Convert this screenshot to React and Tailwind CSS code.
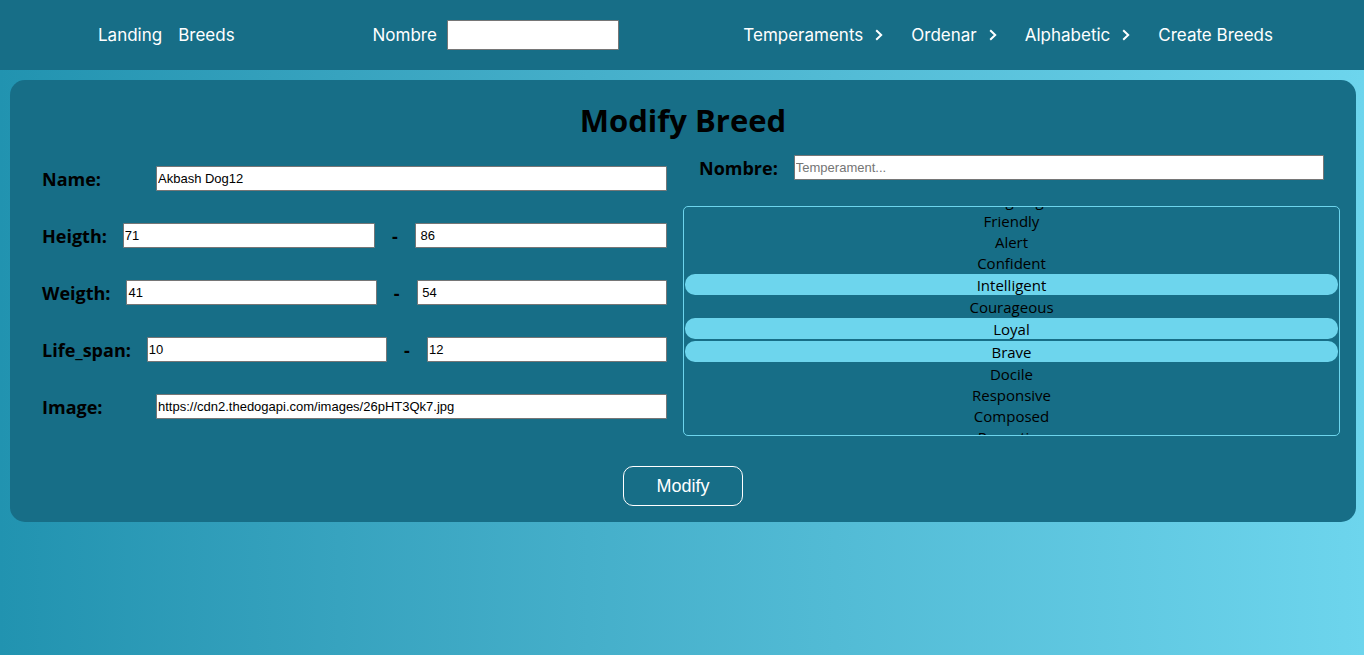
import { useLayoutEffect, useRef, useState } from "react";

const NAV_FONT = "font-[Inter,sans-serif]";
const INPUT =
  "h-[25px] w-full min-w-0 rounded-[1px] border border-[#767676] bg-white px-px font-['Liberation_Sans',Arial,sans-serif] text-[13px] leading-5 text-black placeholder:text-[#757575] focus:outline-none";
const LABEL = "shrink-0 whitespace-nowrap text-[18px] leading-6 font-bold";

const TEMPERAMENTS = [
  "Outgoing",
  "Friendly",
  "Alert",
  "Confident",
  "Intelligent",
  "Courageous",
  "Loyal",
  "Brave",
  "Docile",
  "Responsive",
  "Composed",
  "Receptive",
];

function Chevron() {
  return (
    <svg viewBox="0 0 8 12" className="h-3 w-2" fill="none" stroke="currentColor" strokeWidth="2" aria-hidden="true">
      <path d="M1.2 1.2 6.2 6 1.2 10.8" />
    </svg>
  );
}

function MenuButton({ children }) {
  return (
    <button type="button" className="flex items-center gap-3 whitespace-nowrap">
      {children}
      <Chevron />
    </button>
  );
}

function NavBar() {
  return (
    <nav className={`flex h-[70px] items-center justify-between bg-[#176e87] pr-[91px] pl-[98px] text-[17px] leading-6 font-normal text-white ${NAV_FONT}`}>
      <div className="flex w-[150px] gap-4">
        <a href="#landing">Landing</a>
        <a href="#breeds">Breeds</a>
      </div>
      <div className="flex items-center gap-[10px]">
        <label htmlFor="search">Nombre</label>
        <input id="search" type="text" className="h-[30px] w-[172px] rounded-[1px] border border-[#767676] bg-white px-px text-[13px] text-black" />
      </div>
      <div className="flex items-center gap-7">
        <MenuButton>Temperaments</MenuButton>
        <MenuButton>Ordenar</MenuButton>
        <MenuButton>Alphabetic</MenuButton>
        <a href="#create" className="whitespace-nowrap">Create Breeds</a>
      </div>
    </nav>
  );
}

function TextRow({ id, label, value }) {
  return (
    <div className="flex h-[25px] items-center">
      <label htmlFor={id} className={`${LABEL} w-[114px]`}>{label}</label>
      <input id={id} type="text" defaultValue={value} className={INPUT} />
    </div>
  );
}

function RangeRow({ id, label, min, max }) {
  return (
    <div className="flex h-[25px] items-center gap-4">
      <label htmlFor={id} className={LABEL}>{label}</label>
      <input id={id} type="text" defaultValue={min} className={INPUT} />
      <span className="w-2 shrink-0 text-center text-[18px] leading-6 font-bold">-</span>
      <input type="text" aria-label={`${label} max`} defaultValue={max} className={INPUT} />
    </div>
  );
}

function TemperamentList() {
  const ref = useRef(null);
  const [selected, setSelected] = useState(["Intelligent", "Loyal", "Brave"]);

  useLayoutEffect(() => {
    ref.current.scrollTop = 18;
  }, []);

  const toggle = (name) =>
    setSelected((list) => (list.includes(name) ? list.filter((n) => n !== name) : [...list, name]));

  return (
    <div ref={ref} className="flex h-[230px] flex-col overflow-y-auto rounded-[5px] border border-[#6dd5ed] px-px [scrollbar-width:none]">
      {TEMPERAMENTS.map((name) => (
        <button
          key={name}
          type="button"
          aria-pressed={selected.includes(name)}
          onClick={() => toggle(name)}
          className={`h-[21px] shrink-0 pt-px text-center text-[15px] leading-5 ${selected.includes(name) ? "my-px rounded-[10px] bg-[#6dd5ed]" : ""}`}
        >
          {name}
        </button>
      ))}
    </div>
  );
}

export default function App() {
  return (
    <div className="min-h-screen bg-linear-to-r from-[#2193b0] to-[#6dd5ed] font-['Open_Sans','Noto_Sans',sans-serif] text-black">
      <NavBar />
      <main className="mt-[10px] mr-2 ml-[10px] rounded-[15px] bg-[#176e87] p-4">
        <form onSubmit={(e) => e.preventDefault()}>
          <h1 className="text-center text-[31px] leading-[48px] font-bold">Modify Breed</h1>
          <div className="grid grid-cols-2">
            <div className="flex flex-col gap-8 px-4 pt-[22px]">
              <TextRow id="name" label="Name:" value="Akbash Dog12" />
              <RangeRow id="height" label="Heigth:" min="71" max=" 86" />
              <RangeRow id="weight" label="Weigth:" min="41" max=" 54" />
              <RangeRow id="life" label="Life_span:" min="10" max="12" />
              <TextRow id="image" label="Image:" value="https://cdn2.thedogapi.com/images/26pHT3Qk7.jpg" />
            </div>
            <div className="flex flex-col gap-[26px] pt-[11px]">
              <div className="flex h-[25px] items-center gap-4 px-4">
                <label htmlFor="temperament" className={LABEL}>Nombre:</label>
                <input id="temperament" type="text" placeholder="Temperament..." className={INPUT} />
              </div>
              <TemperamentList />
            </div>
          </div>
          <div className="mt-[30px] flex justify-center">
            <button type="submit" className="h-10 w-[120px] rounded-[10px] border border-white font-['Liberation_Sans',Arial,sans-serif] text-[18px] text-white">
              Modify
            </button>
          </div>
        </form>
      </main>
    </div>
  );
}
